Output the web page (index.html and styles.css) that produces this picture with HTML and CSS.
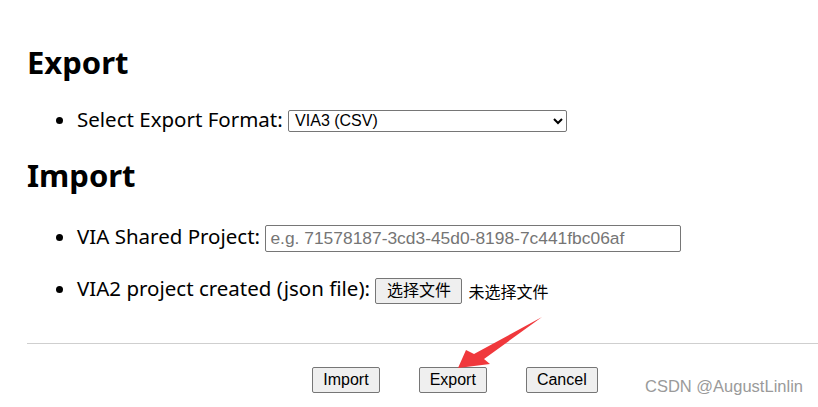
FILE: index.html
```html
<!DOCTYPE html>
<html>
<head>
<meta charset="utf-8">
<link rel="stylesheet" href="styles.css">
</head>
<body>
<div class="page">
  <h2 class="heading heading-export">Export</h2>
  <ul class="list">
    <li class="item item-select">Select Export Format:
      <select class="select">
        <option>VIA3 (CSV)</option>
      </select>
    </li>
  </ul>
  <h2 class="heading heading-import">Import</h2>
  <ul class="list">
    <li class="item item-shared">VIA Shared Project:
      <input class="text-input" type="text" placeholder="e.g. 71578187-3cd3-45d0-8198-7c441fbc06af">
    </li>
    <li class="item item-file">VIA2 project created (json file):
      <span class="file"><button class="btn btn-file">选择文件</button><span class="file-name">未选择文件</span></span>
    </li>
  </ul>
  <hr class="divider">
  <div class="actions">
    <button class="btn btn-action">Import</button>
    <button class="btn btn-action">Export</button>
    <button class="btn btn-action">Cancel</button>
  </div>
</div>
<svg class="arrow" width="818" height="407" viewBox="0 0 818 407">
  <polygon points="542,317 484,359 490,364 458,368 466,350 474,354" fill="#f0383c"/>
</svg>
<div class="watermark">CSDN @AugustLinlin</div>
</body>
</html>
```

FILE: styles.css
```css
html, body {
  margin: 0;
  padding: 0;
  background: #ffffff;
}
body {
  font-family: "Noto Sans", "Open Sans", sans-serif;
  color: #000;
  width: 818px;
  height: 407px;
  overflow: hidden;
  position: relative;
}
.page {
  padding: 0 0 0 27px;
}
.heading {
  font-family: "Noto Sans", "Open Sans", sans-serif;
  font-weight: 700;
  font-size: 31px;
  line-height: 40px;
  margin: 0;
}
.heading-export {
  padding-top: 42px;
}
.heading-import {
  margin-top: 22px;
}
.list {
  margin: 0;
  padding: 0 0 0 50px;
  list-style: disc;
}
.item {
  font-size: 20.5px;
  line-height: 28px;
}
.item-select {
  margin-top: 23px;
}
.item-shared {
  margin-top: 27px;
}
.item-file {
  margin-top: 22px;
}
.select {
  font-family: "Liberation Sans", Arial, sans-serif;
  font-size: 16px;
  width: 279px;
  height: 22px;
  vertical-align: 1px;
  border: 1px solid #767676;
  border-radius: 2px;
  background: #fff;
  color: #000;
  padding: 0 2px;
}
.text-input {
  font-family: "Liberation Sans", Arial, sans-serif;
  font-size: 17.4px;
  width: 416px;
  height: 27px;
  box-sizing: border-box;
  border: 1px solid #767676;
  border-radius: 2px;
  padding: 1px 4px;
  vertical-align: 0;
}
.text-input::placeholder {
  color: #757575;
}
.file {
  display: inline-flex;
  align-items: center;
  gap: 6px;
  vertical-align: 0;
}
.btn {
  font-family: "Liberation Sans", "Noto Sans CJK SC", Arial, sans-serif;
  font-size: 16px;
  background: #efefef;
  color: #000;
  border: 1px solid #767676;
  border-radius: 2px;
  height: 26px;
  padding: 0 10px;
  box-sizing: border-box;
  line-height: 22px;
}
.btn-file {
  width: 87px;
}
.file-name {
  font-family: "Noto Sans CJK SC", sans-serif;
  font-size: 16px;
}
.divider {
  margin: 38px 0 0 0;
  border: 0;
  border-top: 1px solid #cfcfcf;
  height: 0;
}
.actions {
  display: flex;
  justify-content: center;
  gap: 39px;
  padding-left: 65px;
  margin-top: 23px;
}
.arrow {
  position: absolute;
  left: 0;
  top: 0;
  pointer-events: none;
}
.watermark {
  position: absolute;
  left: 645px;
  top: 377px;
  font-family: "Liberation Sans", Arial, sans-serif;
  font-size: 16.5px;
  color: #9a9a9a;
}
```
